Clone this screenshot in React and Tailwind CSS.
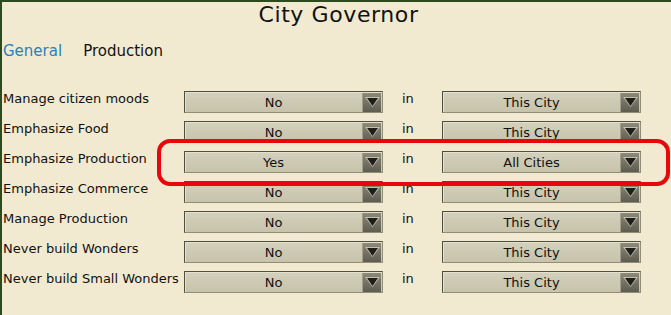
import React from "react";

const rows = [
  { label: "Manage citizen moods", value: "No", scope: "This City" },
  { label: "Emphasize Food", value: "No", scope: "This City" },
  { label: "Emphasize Production", value: "Yes", scope: "All Cities" },
  { label: "Emphasize Commerce", value: "No", scope: "This City" },
  { label: "Manage Production", value: "No", scope: "This City" },
  { label: "Never build Wonders", value: "No", scope: "This City" },
  { label: "Never build Small Wonders", value: "No", scope: "This City" },
];

const Arrow = () => (
  <div className="w-[19px] h-[19px] mr-[1px] bg-gradient-to-b from-[#8d8a7a] to-[#5e5c50] flex items-center justify-center border-l border-[#a19e8a]">
    <svg width="15" height="12" viewBox="0 0 15 12">
      <polygon points="0,1 15,1 7.5,11" fill="#c2bfae" />
      <polygon points="2,2 13,2 7.5,10" fill="#1e1e1a" />
    </svg>
  </div>
);

const Dropdown = ({ text }) => (
  <div className="w-[199px] h-[22px] border border-[#4f4e3d] border-b-[#908d78] border-r-[#908d78] bg-gradient-to-b from-[#d3d0bc] to-[#c7c3ab] flex items-center shadow-[inset_1px_1px_0_#e4e1cf]">
    <div className="flex-1 text-center text-[13px] leading-none text-[#111] pt-[1px]">{text}</div>
    <Arrow />
  </div>
);

const App = () => {
  return (
    <div
      className="relative w-[671px] h-[315px] overflow-hidden bg-[#f1ead0] border-t-2 border-l-2 border-[#2d4a1e] text-[#111]"
      style={{ fontFamily: '"DejaVu Sans", "Liberation Sans", sans-serif' }}
    >
      <div className="h-[30px] flex items-start justify-center pl-[4px]">
        <h1 className="text-[22px] leading-none pt-[2px] tracking-[0.6px] font-normal">City Governor</h1>
      </div>
      <div className="flex items-center gap-[21px] pl-[1px] h-[38px] text-[15px]">
        <span className="text-[#2f7fb5]">General</span>
        <span>Production</span>
      </div>
      <div className="pt-[21px]">
        {rows.map((r) => (
          <div key={r.label} className="flex items-start h-[30px]">
            <div className="w-[182px] pl-[1px] text-[13px] leading-none pt-[1px] whitespace-nowrap">{r.label}</div>
            <Dropdown text={r.value} />
            <div className="w-[59px] pl-[19px] text-[13px] leading-none pt-[1px]">in</div>
            <Dropdown text={r.scope} />
          </div>
        ))}
      </div>
      <div className="absolute left-[155px] top-[137px] w-[513px] h-[47px] border-[4px] border-[#e8080b] rounded-[13px]" />
    </div>
  );
};

export default App;
